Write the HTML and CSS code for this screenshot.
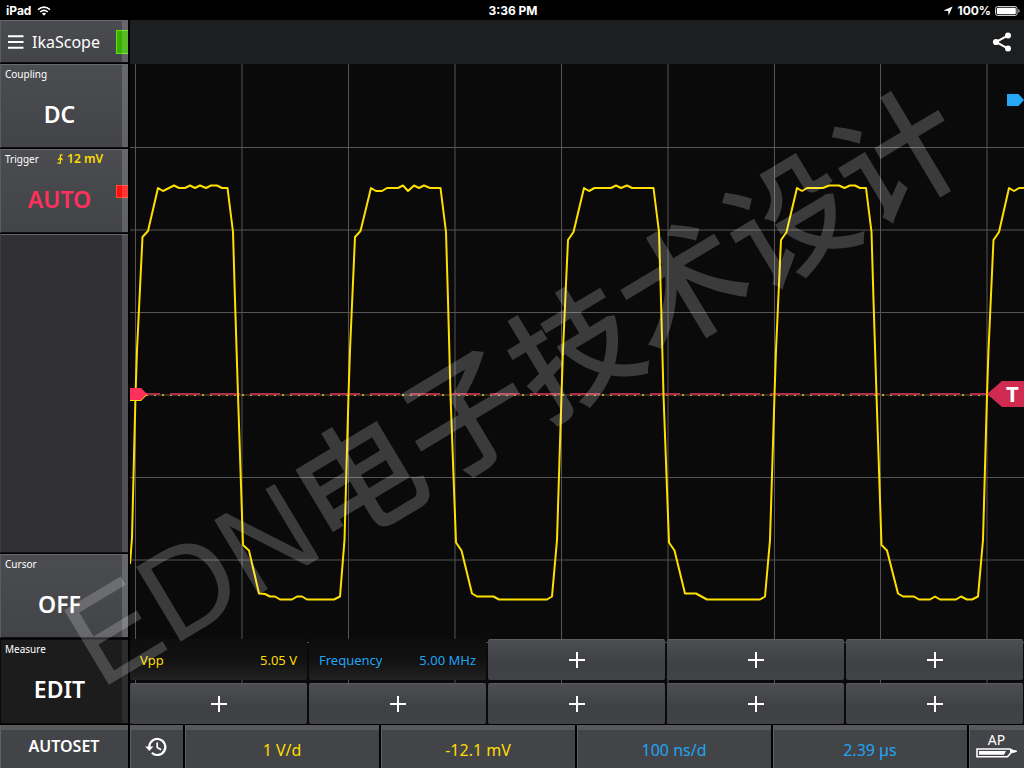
FILE: index.html
```html
<!DOCTYPE html>
<html lang="en">
<head>
<meta charset="utf-8">
<meta name="viewport" content="width=device-width, initial-scale=1">
<title>IkaScope</title>
<link rel="stylesheet" href="styles.css">
</head>
<body>
<div class="app">
  <div class="status">
    <div class="status-left">
      <span>iPad</span>
      <svg width="14" height="10" viewBox="0 0 14 10" aria-hidden="true"><g fill="none" stroke="#fff" stroke-width="1.6"><path d="M1 3.6Q7-1.4 13 3.6"/><path d="M3.2 6Q7 2.8 10.8 6"/></g><path d="M4.9 7.6Q7 6 9.1 7.6L7 9.8z" fill="#fff"/></svg>
    </div>
    <div class="status-time">3:36 PM</div>
    <div class="status-right">
      <svg width="10" height="10" viewBox="0 0 10 10" aria-hidden="true"><path d="M9.6.4 5.6 9.6 5.2 5 .4 4.6z" fill="#fff"/></svg>
      <span>100%</span>
      <svg width="25" height="10" viewBox="0 0 25 10" aria-hidden="true"><rect x=".5" y=".5" width="21.5" height="9" rx="2" fill="none" stroke="#ccc"/><rect x="1.8" y="1.8" width="19" height="6.4" rx="1" fill="#fff"/><path d="M23.3 3.2q1.3 0 1.3 1.8t-1.3 1.8z" fill="#ccc"/></svg>
    </div>
  </div>

  <nav class="sidebar">
    <button class="tile tile-title" type="button">
      <svg width="16" height="14" viewBox="0 0 16 14" aria-hidden="true"><path d="M0 1.2h15.5M0 7h15.5M0 12.8h15.5" stroke="#fff" stroke-width="2"/></svg>
      <span>IkaScope</span>
      <i class="flag flag-green"></i>
    </button>
    <button class="tile" type="button">
      <span class="tile-head">Coupling</span>
      <span class="tile-value">DC</span>
    </button>
    <button class="tile" type="button">
      <span class="tile-head">Trigger
        <span class="level"><svg width="6" height="10" viewBox="0 0 6 10" aria-hidden="true"><path d="M5.6.8H3.4V9.2H.4M1 6 3.4 3.6 5.6 6" fill="none" stroke="#ffdc00" stroke-width="1.2"/></svg>12 mV</span>
      </span>
      <span class="tile-value auto">AUTO</span>
      <i class="flag flag-red"></i>
    </button>
    <div class="tile tile-blank"></div>
    <button class="tile" type="button">
      <span class="tile-head">Cursor</span>
      <span class="tile-value">OFF</span>
    </button>
    <button class="tile tile-active" type="button">
      <span class="tile-head">Measure</span>
      <span class="tile-value">EDIT</span>
    </button>
  </nav>

  <main class="content">
    <header class="topbar">
      <button class="share" type="button" aria-label="Share">
        <svg width="20" height="20" viewBox="0 0 20 20"><path d="M16 3.4 4 10l12 6.6" fill="none" stroke="#fff" stroke-width="2"/><g fill="#fff"><circle cx="16" cy="3.4" r="3"/><circle cx="4" cy="10" r="3.1"/><circle cx="16" cy="16.6" r="3"/></g></svg>
      </button>
    </header>
    <section class="scope">
      <svg class="plot" viewBox="130 64 894 660" preserveAspectRatio="none" aria-label="Waveform">
        <path class="grid-line" d="M135.5 64V724M242 64V724M348.5 64V724M455 64V724M561.5 64V724M668 64V724M774.5 64V724M880.5 64V724M987 64V724M130 147.5H1024M130 230H1024M130 312.5H1024M130 395H1024M130 477.5H1024M130 560H1024M130 642.5H1024"/>
        <path class="zero-line" d="M138 395H1024"/>
        <path class="trigger-line" d="M130 394H990"/>
        <polyline class="wave" points="130,564 132,538 135.5,395 137,350 142.5,237 148,231 158,188 163,191 169,188 174,185.5 179,188 185,188 190,185.5 195,188 200,185.5 206,188 211,185.5 217,185.5 222,188 227.5,188 233,232 235,300 238,395 243,545 249,550.5 259,593.5 265,594 270,596.5 275,596.5 280,599.5 292,599.5 297,596.5 302,596.5 307,599.5 334,599.5 340,596.5 344.5,540 348.5,395 350,350 355,237 360.5,231 371,188 376,191 382,191 387,188 398,188 403,185.5 408,191 414,185.5 419,188 424,185.5 430,188 440.5,188 446,232 448,300 450.5,395 456,542.5 461.5,550.5 472,593.5 477,596.5 493.5,596.5 499,599.5 547,599.5 552,596.5 557,540 561.5,395 563,350 568,240 573.5,232 584,188 589,191 594.5,188 611,188 616,185.5 621,188 627,185.5 632,188 653.5,188 659,232 661,300 663.5,395 669,542.5 674.5,550.5 685,593.5 696,593.5 707,599.5 760,599.5 765,596.5 770,540 774.5,395 776,350 781,240 786.5,232 797,188 802,191 807,188 823,188 829,185.5 839,185.5 844.5,188 850,185.5 855,185.5 860,188 866,188 871.5,232 873.5,300 876.5,395 881.5,545 887,550.5 898,593.5 903,596.5 914,596.5 919,599.5 930,599.5 935,596.5 940,599.5 956,599.5 961,596.5 967,599.5 972,599.5 978,596.5 983,540 987,395 988.5,350 993.5,240 999,232 1009,188 1014,191 1019,188 1024,188"/>
        <path fill="#ffdc00" d="M130 389h11l6 6-6 6h-11z"/>
        <path fill="#ff315c" d="M130 388h11l6 6-6 6h-11z"/>
        <path fill="#26a8f4" d="M1007 94h11.5l5.5 6-5.5 6H1007z"/>
        <path fill="#cf2b50" d="M987 394l15-13h22v26h-22z"/>
        <text class="marker-text" x="1006" y="402">T</text>
      </svg>
      <div class="measures">
        <button class="measure filled yellow" type="button"><span>Vpp</span><span>5.05 V</span></button>
        <button class="measure filled blue" type="button"><span>Frequency</span><span>5.00 MHz</span></button>
        <button class="measure" type="button" aria-label="Add measure"><i class="plus"></i></button>
        <button class="measure" type="button" aria-label="Add measure"><i class="plus"></i></button>
        <button class="measure" type="button" aria-label="Add measure"><i class="plus"></i></button>
        <button class="measure" type="button" aria-label="Add measure"><i class="plus"></i></button>
        <button class="measure" type="button" aria-label="Add measure"><i class="plus"></i></button>
        <button class="measure" type="button" aria-label="Add measure"><i class="plus"></i></button>
        <button class="measure" type="button" aria-label="Add measure"><i class="plus"></i></button>
        <button class="measure" type="button" aria-label="Add measure"><i class="plus"></i></button>
      </div>
    </section>
  </main>

  <footer class="toolbar">
    <button class="tool autoset" type="button">AUTOSET</button>
    <button class="tool" type="button" aria-label="History">
      <svg width="24" height="20" viewBox="0 0 24 20"><path d="M4.3 10A8 8 0 1 1 6.8 15.8" fill="none" stroke="#fff" stroke-width="2.2"/><path d="M.2 9.6h8.2L4.3 14z" fill="#fff"/><path d="M12.2 5.6v5l4 2.2" fill="none" stroke="#fff" stroke-width="1.7"/></svg>
    </button>
    <button class="tool yellow" type="button">1 V/d</button>
    <button class="tool yellow" type="button">-12.1 mV</button>
    <button class="tool blue" type="button">100 ns/d</button>
    <button class="tool blue" type="button">2.39 µs</button>
    <button class="tool probe" type="button">
      <span>AP</span>
      <svg width="42" height="10" viewBox="0 0 42 10" aria-hidden="true"><path d="M1 1h33l2.5 1.5 4 .8-5 .9L31.5 8.700H1z" fill="none" stroke="#fff" stroke-width="1.6"/><path d="M3 3h27l-2 3.8H3z" fill="#fff"/><path d="M34 1 41.500 3.400 34 5.400z" fill="#fff"/></svg>
    </button>
  </footer>

  <svg class="watermark" viewBox="0 0 1024 768" aria-hidden="true"><text x="100" y="690" transform="rotate(-31 100 690)">EDN电子技术设计</text></svg>
</div>
</body>
</html>
```
FILE: styles.css
```css
* { box-sizing: border-box; }

body {
  margin: 0;
  background: #000;
  color: #fff;
  font-family: "Noto Sans", "Open Sans", sans-serif;
}

button {
  margin: 0;
  padding: 0;
  border: 0;
  color: inherit;
  font: inherit;
  cursor: pointer;
}

svg { display: block; }

.app {
  position: relative;
  display: grid;
  grid-template: 20px 1fr 44px / 130px 1fr;
  min-height: 100vh;
}

.status {
  grid-column: 1 / -1;
  display: grid;
  grid-template-columns: 1fr auto 1fr;
  align-items: center;
  padding: 1px 4px 0 6px;
  font: 700 12px/19px Inter, sans-serif;
}

.status-left,
.status-right {
  display: flex;
  align-items: center;
  gap: 6px;
}

.status-right {
  justify-content: flex-end;
  gap: 4px;
}

.sidebar {
  display: grid;
  grid-template-rows: 43px 84px 84px 1fr 84px 85px;
  row-gap: 1px;
  padding-right: 2px;
}

.tile {
  position: relative;
  display: flex;
  flex-direction: column;
  padding: 3px 4px;
  border-left: 1px solid #5b5c60;
  border-top: 1px solid #68696d;
  border-bottom: 1px solid #111;
  background: linear-gradient(#4b4c50, #434448);
  text-align: left;
  overflow: hidden;
}

.tile::after {
  content: "";
  position: absolute;
  top: 0;
  right: 0;
  bottom: 0;
  width: 6px;
  background: rgba(255, 255, 255, 0.16);
}

.tile-title {
  flex-direction: row;
  align-items: center;
  gap: 8px;
  padding: 0 7px;
  font-size: 16px;
}

.tile-head {
  display: flex;
  justify-content: space-between;
  padding-right: 21px;
  font-size: 10px;
  line-height: 12px;
}

.level {
  display: flex;
  align-items: center;
  gap: 4px;
  color: #ffdc00;
  font-size: 12px;
  font-weight: 600;
}

.tile-value {
  padding-right: 10px;
  font-size: 23px;
  font-weight: 600;
  line-height: 68px;
  text-align: center;
}

.auto { color: #ff315c; }

.tile-blank {
  background: #303035;
  border-left-color: #3c3c41;
}

.tile-active {
  background: #1c1c1c;
  border-color: #0a0a0a;
}

.tile-active::after { background: rgba(255, 255, 255, 0.08); }

.flag {
  position: absolute;
  right: 0;
  width: 12px;
}

.flag-green {
  top: 9px;
  height: 24px;
  border: 1px solid #66e010;
  border-right: 0;
  background: #38b000;
}

.flag-red {
  top: 35px;
  height: 13px;
  border: 1px solid #ff4a30;
  border-right: 0;
  background: #ff1010;
}

.content {
  display: grid;
  grid-template-rows: 44px 1fr;
  min-width: 0;
}

.topbar {
  display: flex;
  align-items: center;
  justify-content: flex-end;
  padding-right: 12px;
  background: #1d1e20;
}

.share { background: none; }

.scope {
  display: grid;
  min-height: 0;
  background: #0a0a0a;
}

.plot,
.measures { grid-area: 1 / 1; }

.plot {
  width: 100%;
  height: 100%;
  contain: size;
}

.grid-line {
  fill: none;
  stroke: #555;
}

.zero-line {
  stroke: #c8a800;
  stroke-width: 2;
  stroke-dasharray: 2 6;
}

.trigger-line {
  stroke: #b02c4a;
  stroke-width: 2;
  stroke-dasharray: 30 10;
}

.wave {
  fill: none;
  stroke: #ffdf00;
  stroke-width: 2;
  stroke-linejoin: round;
}

.marker-text {
  fill: #fff;
  font: 700 22px "Noto Sans", sans-serif;
}

.measures {
  align-self: end;
  display: grid;
  grid-template-columns: repeat(5, 1fr);
  grid-auto-rows: 41px;
  gap: 3px 2px;
  padding-right: 1px;
}

.measure {
  display: flex;
  align-items: center;
  justify-content: center;
  border-top: 1px solid #5b5c60;
  border-radius: 2px;
  background: linear-gradient(#4d4e52, #3f4044 60%, #424347);
  font-size: 13px;
}

.filled {
  justify-content: space-between;
  padding: 0 10px;
  border-top-color: #0e0e0e;
  background: linear-gradient(#0e0e0e, #111 50%, #222);
}

.yellow { color: #ffdc00; }
.blue { color: #21a4f3; }

.plus {
  width: 16px;
  height: 16px;
  background:
    linear-gradient(#fff, #fff) center / 16px 2px no-repeat,
    linear-gradient(#fff, #fff) center / 2px 16px no-repeat;
}

.toolbar {
  grid-column: 1 / -1;
  display: grid;
  grid-template-columns: 130px 55px repeat(4, 1fr) 55px;
}

.tool {
  display: flex;
  align-items: center;
  justify-content: center;
  border: solid #000;
  border-width: 1px 2px 0 0;
  background: linear-gradient(#58595d 5px, #434448 5px);
  box-shadow: inset 1px 0 #606165;
  font-size: 16px;
}

.tool.yellow,
.tool.blue { padding-top: 7px; }

.tool.autoset {
  padding-bottom: 2px;
  font-weight: 600;
}

.tool.probe {
  flex-direction: column;
  padding-bottom: 3px;
  border-right-width: 0;
  font-size: 14px;
  line-height: 16px;
}

.watermark {
  position: absolute;
  inset: 0;
  width: 100%;
  height: 100%;
  pointer-events: none;
}

.watermark text {
  fill: rgba(255, 255, 255, 0.2);
  font: 500 126px "Liberation Sans", "Noto Sans CJK SC", sans-serif;
}
```
